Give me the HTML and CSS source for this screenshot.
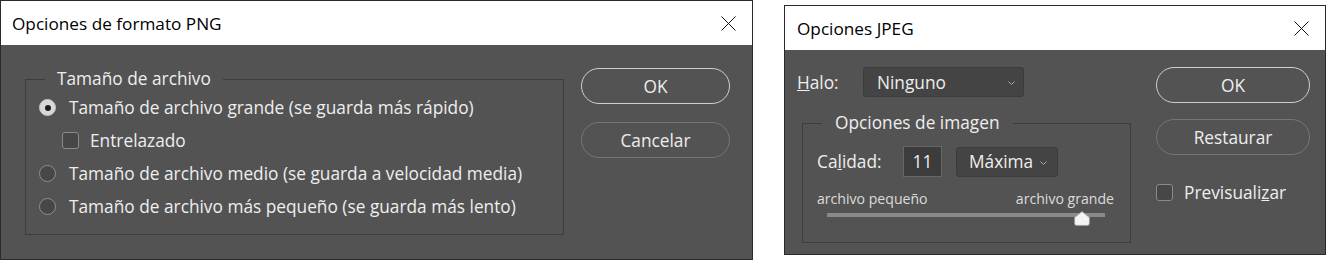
FILE: index.html
```html
<!DOCTYPE html>
<html lang="es">
<head>
  <meta charset="UTF-8">
  <title>Opciones de formato</title>
  <link rel="stylesheet" href="styles.css">
</head>
<body>
  <div class="dialog dialog-png">
    <div class="title-bar">
      <span>Opciones de formato PNG</span>
      <svg class="close" viewBox="0 0 15 15"><path d="M0.5 0.5 L14.5 14.5 M14.5 0.5 L0.5 14.5" /></svg>
    </div>
    <div class="dialog-body">
      <fieldset class="group group-size">
        <legend>Tamaño de archivo</legend>
        <div class="option"><span class="radio checked"></span>Tamaño de archivo grande (se guarda más rápido)</div>
        <div class="option sub"><span class="check"></span>Entrelazado</div>
        <div class="option"><span class="radio"></span>Tamaño de archivo medio (se guarda a velocidad media)</div>
        <div class="option"><span class="radio"></span>Tamaño de archivo más pequeño (se guarda más lento)</div>
      </fieldset>
      <div class="buttons buttons-png">
        <button class="btn btn-default">OK</button>
        <button class="btn">Cancelar</button>
      </div>
    </div>
  </div>

  <div class="dialog dialog-jpeg">
    <div class="title-bar">
      <span>Opciones JPEG</span>
      <svg class="close" viewBox="0 0 15 15"><path d="M0.5 0.5 L14.5 14.5 M14.5 0.5 L0.5 14.5" /></svg>
    </div>
    <div class="dialog-body">
      <div class="jpeg-main">
        <div class="halo-row">
          <span class="label halo-label"><u>H</u>alo:</span>
          <div class="select select-halo">
            <span>Ninguno</span>
            <svg class="chevron" viewBox="0 0 7 4"><path d="M0.5 0.5 L3.5 3.5 L6.5 0.5" /></svg>
          </div>
        </div>
        <fieldset class="group group-image">
          <legend>Opciones de imagen</legend>
          <div class="quality-row">
            <span class="label quality-label">Ca<u>l</u>idad:</span>
            <div class="number-input">11</div>
            <div class="select select-quality">
              <span>Máxima</span>
              <svg class="chevron" viewBox="0 0 7 4"><path d="M0.5 0.5 L3.5 3.5 L6.5 0.5" /></svg>
            </div>
          </div>
          <div class="slider-labels">
            <span>archivo pequeño</span>
            <span>archivo grande</span>
          </div>
          <div class="slider-track">
            <svg class="slider-thumb" style="left: 91.7%" viewBox="0 0 16 15"><path d="M8 0.6 L15.4 6.4 L15.4 12.5 Q15.4 14.4 13.5 14.4 L2.5 14.4 Q0.6 14.4 0.6 12.5 L0.6 6.4 Z" /></svg>
          </div>
        </fieldset>
      </div>
      <div class="buttons buttons-jpeg">
        <button class="btn btn-default">OK</button>
        <button class="btn">Restaurar</button>
        <div class="option preview"><span class="check"></span>Previsuali<u>z</u>ar</div>
      </div>
    </div>
  </div>
</body>
</html>
```

FILE: styles.css
```css
* {
  box-sizing: border-box;
}

body {
  margin: 0;
  background: #fff;
  display: flex;
  align-items: flex-start;
  font-family: 'Open Sans', 'Noto Sans', sans-serif;
}

.dialog {
  background: #535353;
  border: 1px solid #2a2a2a;
  color: #eeeeee;
  font-size: 17.3px;
}

.dialog-png {
  width: 753px;
  height: 260px;
}

.dialog-jpeg {
  width: 542px;
  height: 250px;
  margin: 5px 0 0 31px;
}

.title-bar {
  background: #fff;
  height: 44px;
  display: flex;
  align-items: center;
  justify-content: space-between;
  padding: 0 16px 0 11px;
  color: #000;
  font-size: 17.2px;
}

.dialog-jpeg .title-bar {
  padding-left: 12px;
}

.close {
  width: 15px;
  height: 15px;
  fill: none;
  stroke: #111;
  stroke-width: 1;
}

.dialog-body {
  display: flex;
}

.dialog-png .dialog-body {
  padding: 23px 0 0 24px;
}

.dialog-jpeg .dialog-body {
  padding: 17px 15px 0 12px;
}

.group {
  margin: 0;
  border: 1px solid #3d3d3d;
  min-width: 0;
}

.group legend {
  line-height: 22px;
}

.group-size {
  width: 539px;
  height: 167px;
  padding: 1px 0 0 13px;
}

.group-size legend {
  margin-left: 6px;
  padding: 0 12px;
}

.option {
  height: 33px;
  display: flex;
  align-items: center;
}

.option.sub {
  padding-left: 23px;
}

.radio {
  width: 17px;
  height: 17px;
  border-radius: 50%;
  border: 1px solid #909090;
  background: #474747;
  margin-right: 13px;
  display: flex;
  align-items: center;
  justify-content: center;
}

.radio.checked {
  background: #d8d8d8;
  border-color: #c4c4c4;
}

.radio.checked::after {
  content: '';
  width: 6px;
  height: 6px;
  border-radius: 50%;
  background: #1e1e1e;
}

.check {
  width: 17px;
  height: 17px;
  border-radius: 3px;
  border: 1px solid #8a8a8a;
  background: #474747;
  margin-right: 11px;
}

.buttons {
  display: flex;
  flex-direction: column;
}

.buttons-png {
  margin-left: 17px;
  gap: 18px;
}

.buttons-jpeg {
  margin-left: 25px;
  gap: 16px;
}

.btn {
  width: 149px;
  height: 36px;
  border-radius: 18px;
  border: 1px solid #767676;
  background: transparent;
  color: #eeeeee;
  font-family: inherit;
  font-size: 17.3px;
  padding: 0;
}

.buttons-jpeg .btn {
  width: 154px;
}

.btn-default {
  border-color: #cfcfcf;
}

.jpeg-main {
  width: 334px;
}

.halo-row {
  display: flex;
  align-items: center;
  height: 30px;
}

.halo-label {
  width: 66px;
}

.select {
  height: 30px;
  display: flex;
  align-items: center;
  justify-content: space-between;
  background: #444444;
  border: 1px solid #3c3c3c;
  border-radius: 3px;
}

.select-halo {
  width: 161px;
  padding: 0 8px 0 13px;
}

.chevron {
  width: 7px;
  height: 4px;
  margin-top: 2px;
  fill: none;
  stroke: #a8a8a8;
  stroke-width: 1;
}

.group-image {
  margin: 15px 0 0 5px;
  width: 329px;
  height: 131px;
  padding: 12px 0 0 14px;
}

.group-image legend {
  margin-left: 5px;
  padding: 0 13px;
}

.quality-row {
  display: flex;
  align-items: center;
  height: 31px;
}

.quality-label {
  width: 86px;
}

.number-input {
  width: 39px;
  height: 31px;
  display: flex;
  align-items: center;
  justify-content: center;
  background: #3c3c3c;
  border: 1px solid #676767;
}

.select-quality {
  width: 102px;
  margin-left: 14px;
  padding: 0 10px 0 12px;
}

.slider-labels {
  width: 297px;
  display: flex;
  justify-content: space-between;
  margin-top: 13px;
  font-size: 14.1px;
  line-height: 18px;
  color: #dcdcdc;
}

.slider-track {
  position: relative;
  width: 278px;
  height: 4px;
  margin: 5px 0 0 10px;
  background: #8a8a8a;
}

.slider-thumb {
  position: absolute;
  top: -2px;
  width: 16px;
  height: 15px;
  margin-left: -8px;
  fill: #f4f4f4;
  stroke: #9a9a9a;
  stroke-width: 0.8;
}

.preview {
  margin-top: 10px;
  height: 22px;
}
```
